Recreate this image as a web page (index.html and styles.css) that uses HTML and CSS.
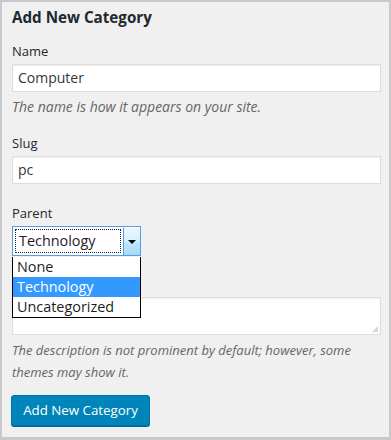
FILE: index.html
```html
<!DOCTYPE html>
<html>
<head>
<meta charset="utf-8">
<link rel="stylesheet" href="styles.css">
</head>
<body>
<div class="panel">
  <h2 class="title">Add New Category</h2>
  <div class="field field-name">
    <label class="label">Name</label>
    <div class="input">Computer</div>
    <p class="hint hint-name">The name is how it appears on your site.</p>
  </div>
  <div class="field field-slug">
    <label class="label">Slug</label>
    <div class="input">pc</div>
  </div>
  <div class="field field-parent">
    <label class="label">Parent</label>
    <div class="select">
      <div class="select-value"><span class="focus-rect">Technology</span></div>
      <div class="select-btn"><span class="arrow"></span></div>
      <ul class="dropdown">
        <li>None</li>
        <li class="selected">Technology</li>
        <li>Uncategorized</li>
      </ul>
    </div>
  </div>
  <div class="field field-desc">
    <div class="label-spacer"></div>
    <div class="textarea"><span class="grip"></span></div>
    <p class="hint hint-multi">The description is not prominent by default; however, some themes may show it.</p>
  </div>
  <button class="btn">Add New Category</button>
</div>
</body>
</html>
```
FILE: styles.css
```css
html, body {
  margin: 0;
  padding: 0;
  background: #f0f0f0;
}
.panel {
  box-sizing: border-box;
  width: 391px;
  height: 440px;
  border: 2px solid #c9c9c9;
  border-bottom-width: 3px;
  background: #f0f0f0;
  padding: 0 8px 0 10px;
  font-family: "Open Sans", "Noto Sans", sans-serif;
  color: #23282d;
}
.title {
  margin: 4px 0 0 0;
  font-size: 15.2px;
  line-height: 22px;
  font-weight: 700;
  color: #23282d;
}
.field {
  display: flex;
  flex-direction: column;
}
.field-name { margin-top: 13px; }
.field-slug { margin-top: 16px; }
.field-parent { margin-top: 19px; }
.field-desc { margin-top: 18px; }
.label {
  display: block;
  font-size: 13px;
  line-height: 20px;
  margin-bottom: 3px;
}
.label-spacer {
  height: 20px;
  margin-bottom: 3px;
}
.input {
  box-sizing: border-box;
  height: 28px;
  width: 369px;
  background: #fff;
  border: 1px solid #ddd;
  box-shadow: inset 0 1px 2px rgba(0,0,0,0.07);
  font-size: 14px;
  line-height: 26px;
  padding: 0 5px;
  color: #32373c;
}
.hint {
  margin: 5px 0 0 0;
  font-size: 13px;
  line-height: 20px;
  font-style: italic;
  color: #666;
}
.hint-name {
  font-size: 14px;
}
.hint-multi {
  margin-top: 4px;
  line-height: 22px;
}
.select {
  position: relative;
  box-sizing: border-box;
  width: 129px;
  height: 30px;
  border: 1px solid #569de5;
  background: #fff;
  display: flex;
}
.select-value {
  flex: 1;
  padding: 2px;
  display: flex;
}
.focus-rect {
  flex: 1;
  border: 1px dotted #222;
  font-size: 14.4px;
  line-height: 22px;
  padding-left: 3px;
  color: #1e1e1e;
}
.select-btn {
  width: 17px;
  box-sizing: border-box;
  border-left: 1px solid #569de5;
  border-top: 1px solid #fff;
  background: linear-gradient(#eaf6fd, #d9f0fc 45%, #bee6fd 55%, #a7d9f5);
  display: flex;
  align-items: center;
  justify-content: center;
}
.arrow {
  width: 0;
  height: 0;
  border-left: 4px solid transparent;
  border-right: 4px solid transparent;
  border-top: 4px solid #000;
}
.dropdown {
  position: absolute;
  left: -1px;
  top: 30px;
  z-index: 5;
  box-sizing: border-box;
  width: 129px;
  margin: 0;
  padding: 0;
  list-style: none;
  background: #fff;
  border: 1px solid #000;
  border-top: none;
  font-size: 14.4px;
  line-height: 20px;
  color: #1e1e1e;
}
.dropdown li {
  padding-left: 4px;
  height: 20px;
}
.dropdown li.selected {
  background: #3399ff;
  color: #fff;
}
.textarea {
  position: relative;
  box-sizing: border-box;
  width: 369px;
  height: 38px;
  background: #fff;
  border: 1px solid #ddd;
  box-shadow: inset 0 1px 2px rgba(0,0,0,0.07);
}
.grip {
  position: absolute;
  right: 2px;
  bottom: 2px;
  width: 6px;
  height: 6px;
  background:
    radial-gradient(circle, #aaa 0.6px, transparent 0.8px) 0 0 / 2px 2px;
  clip-path: polygon(100% 0, 100% 100%, 0 100%);
}
.btn {
  margin-top: 12px;
  margin-left: -1px;
  box-sizing: border-box;
  height: 31px;
  width: 139px;
  padding: 0;
  background: #0085ba;
  border: 1px solid #0073aa;
  border-radius: 3px;
  box-shadow: 0 1px 0 #006799;
  color: #fff;
  font-family: "Open Sans", "Noto Sans", sans-serif;
  font-size: 13.3px;
  line-height: 29px;
}
```
